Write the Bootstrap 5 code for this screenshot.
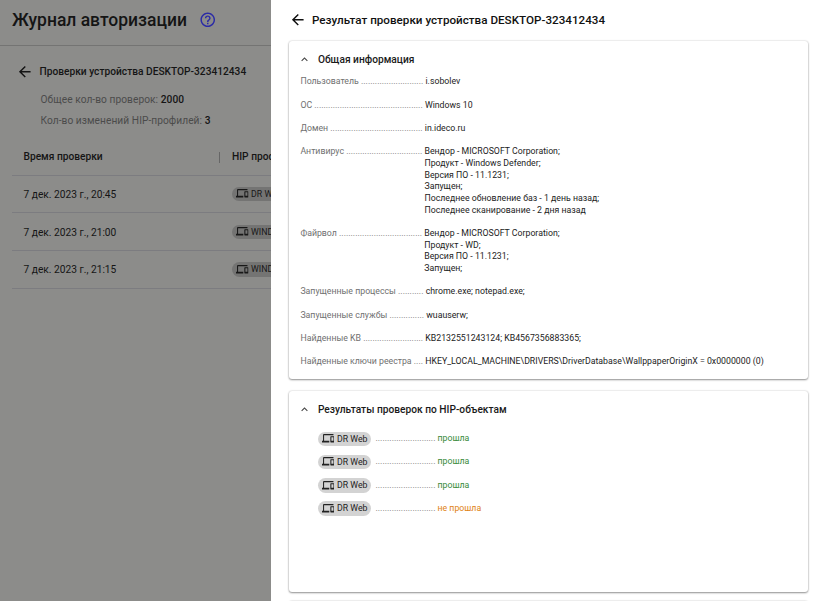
<!DOCTYPE html>
<html lang="ru">
<head>
<meta charset="utf-8">
<meta name="viewport" content="width=device-width, initial-scale=1">
<title>Журнал авторизации</title>
<link href="https://cdn.jsdelivr.net/npm/bootstrap@5.3.0/dist/css/bootstrap.min.css" rel="stylesheet">
<style>
body{width:820px;height:601px;overflow:hidden;font-family:Roboto,"Liberation Sans",sans-serif;font-size:8.75px;line-height:11.67px;color:#1c1c1c;background:#8c8c8a}
svg{display:block;flex:none}
.journal{width:820px;height:601px;color:#151515;font-size:10.2px;line-height:14px}
.journal-head{height:46px;padding:0 12px 6px;border-bottom:1px solid #747473}
.journal-title{font-size:17.5px;line-height:24px;font-weight:500}
.help-icon{color:#2b2ba6;margin-left:12px}
.device{padding:17.5px 0 0 16px;height:92.6px}
.device-name{gap:6px;font-weight:500}
.device-name svg{margin-top:-1px}
.stats{padding-left:24.5px;padding-top:6.2px;color:#4b4b4a;letter-spacing:.05px}
.device-name + .stats{padding-top:13.4px}
.stats b{font-weight:500;color:#151515}
.log{margin-left:12px}
.log-row{height:37.85px;border-bottom:1px solid #7c7c80;padding:1.5px 0 0 11.5px}
.log-row:first-child{height:37px;font-weight:500}
.log-row .chip{margin-left:13px;margin-top:-1.5px}
.when{width:195.5px}
.sep{width:1px;height:11px;background:#666;margin-right:12px}
.chip{height:14.6px;border-radius:8px;background:#d3d3d3;padding:0 4.3px 0 4px;gap:2.6px;color:#222;font-size:8.75px;line-height:14.6px}
.chip svg{margin-top:-1px}
.journal .chip{background:#747473;color:#181818}
.panel{left:271px;top:0;width:549px;height:601px;background:#fff;padding:0 12px 0 18px}
.panel-title{height:41px;font-size:11.67px;font-weight:500;gap:6px;color:#111;margin-left:-.5px}
.panel-title svg{margin-top:-1px}
.sheet{background:#fff;border-radius:3px;box-shadow:0 1px 2px rgba(0,0,0,.4),0 0 2px rgba(0,0,0,.2);padding:12px 11.4px}
.sheet-info{height:337.5px;margin-bottom:12px}
.sheet-hip{height:201.5px;margin-bottom:8.5px}
.sheet-title{font-size:10.2px;line-height:14px;font-weight:500;gap:7.5px;margin-bottom:9.4px;color:#1a1a1a}
.sheet-title svg{margin:-1px -1px 0 -2px;color:#444}
.sheet-hip .sheet-title{margin-bottom:15px}
.fact{margin-bottom:11.67px;white-space:pre}
.fact-name{color:#707070}
.checks{padding-left:17.5px}
.check{height:14.6px;margin-bottom:8.73px;gap:4px}
.check .chip{width:53.6px}
.check .fact-name{margin-right:-2px}
.ok{color:#388a3c}.fail{color:#e08214}
</style>
</head>
<body>
<svg width="0" height="0" class="position-absolute" aria-hidden="true">
<symbol id="back" viewBox="0 0 24 24"><path fill="currentColor" d="M20 11H7.83l5.59-5.59L12 4l-8 8 8 8 1.41-1.41L7.83 13H20v-2z"/></symbol>
<symbol id="devices" viewBox="0 0 24 24"><path fill="currentColor" d="M4 6h18V4H4c-1.1 0-2 .9-2 2v11H0v3h14v-3H4V6zm19 2h-6c-.55 0-1 .45-1 1v10c0 .55.45 1 1 1h6c.55 0 1-.45 1-1V9c0-.55-.45-1-1-1zm-1 9h-4v-7h4v7z"/></symbol>
<symbol id="less" viewBox="0 0 24 24"><path fill="currentColor" d="M12 8l-6 6 1.41 1.41L12 10.83l4.59 4.58L18 14z"/></symbol>
<symbol id="help" viewBox="0 0 24 24"><path fill="currentColor" d="M11 18h2v-2h-2v2zm1-16C6.48 2 2 6.48 2 12s4.48 10 10 10 10-4.48 10-10S17.52 2 12 2zm0 18c-4.41 0-8-3.59-8-8s3.59-8 8-8 8 3.59 8 8-3.59 8-8 8zm0-14c-2.21 0-4 1.79-4 4h2c0-1.1.9-2 2-2s2 .9 2 2c0 2-3 1.75-3 5h2c0-2.25 3-2.5 3-5 0-2.21-1.79-4-4-4z"/></symbol>
</svg>

<main class="journal overflow-hidden">
  <header class="journal-head d-flex align-items-center">
    <div class="journal-title">Журнал авторизации</div>
    <svg class="help-icon" width="17.5" height="17.5"><use href="#help"/></svg>
  </header>
  <section class="device">
    <div class="device-name d-flex align-items-center">
      <svg width="17.5" height="17.5"><use href="#back"/></svg><span>Проверки устройства DESKTOP-323412434</span>
    </div>
    <div class="stats">Общее кол-во проверок: <b>2000</b></div>
    <div class="stats">Кол-во изменений HIP-профилей: <b>3</b></div>
  </section>
  <section class="log">
    <div class="log-row d-flex align-items-center"><span class="when">Время проверки</span><i class="sep"></i><span>HIP профили</span></div>
    <div class="log-row d-flex align-items-center"><span class="when">7 дек. 2023 г., 20:45</span><span class="chip d-flex align-items-center"><svg width="12.5" height="12.5"><use href="#devices"/></svg>DR Web</span></div>
    <div class="log-row d-flex align-items-center"><span class="when">7 дек. 2023 г., 21:00</span><span class="chip d-flex align-items-center"><svg width="12.5" height="12.5"><use href="#devices"/></svg>WINDOWS</span></div>
    <div class="log-row d-flex align-items-center"><span class="when">7 дек. 2023 г., 21:15</span><span class="chip d-flex align-items-center"><svg width="12.5" height="12.5"><use href="#devices"/></svg>WINDOWS</span></div>
  </section>
</main>

<aside class="panel position-absolute overflow-hidden">
  <div class="panel-title d-flex align-items-center"><svg width="17.5" height="17.5"><use href="#back"/></svg><span>Результат проверки устройства DESKTOP-323412434</span></div>
  <section class="sheet sheet-info">
    <div class="sheet-title d-flex align-items-center"><svg width="13" height="13"><use href="#less"/></svg><span>Общая информация</span></div>
    <div class="fact d-flex"><span class="fact-name">Пользователь ........................... </span><span>i.sobolev</span></div>
    <div class="fact d-flex"><span class="fact-name">ОС ............................................... </span><span>Windows 10</span></div>
    <div class="fact d-flex"><span class="fact-name">Домен ........................................ </span><span>in.ideco.ru</span></div>
    <div class="fact d-flex"><span class="fact-name">Антивирус ................................. </span><span>Вендор - MICROSOFT Corporation;<br>Продукт - Windows Defender;<br>Версия ПО - 11.1231;<br>Запущен;<br>Последнее обновление баз - 1 день назад;<br>Последнее сканирование - 2 дня назад</span></div>
    <div class="fact d-flex"><span class="fact-name">Файрвол .................................... </span><span>Вендор - MICROSOFT Corporation;<br>Продукт - WD;<br>Версия ПО - 11.1231;<br>Запущен;</span></div>
    <div class="fact d-flex"><span class="fact-name">Запущенные процессы ........... </span><span>chrome.exe; notepad.exe;</span></div>
    <div class="fact d-flex"><span class="fact-name">Запущенные службы ............... </span><span>wuauserw;</span></div>
    <div class="fact d-flex"><span class="fact-name">Найденные KB .......................... </span><span>KB2132551243124; KB4567356883365;</span></div>
    <div class="fact d-flex"><span class="fact-name">Найденные ключи реестра .... </span><span>HKEY_LOCAL_MACHINE\DRIVERS\DriverDatabase\WallppaperOriginX = 0x0000000 (0)</span></div>
  </section>
  <section class="sheet sheet-hip">
    <div class="sheet-title d-flex align-items-center"><svg width="13" height="13"><use href="#less"/></svg><span>Результаты проверок по HIP-объектам</span></div>
    <div class="checks">
      <div class="check d-flex align-items-center"><span class="chip d-flex align-items-center text-nowrap"><svg width="12.5" height="12.5"><use href="#devices"/></svg>DR Web</span><span class="fact-name">..........................</span><span class="ok">прошла</span></div>
      <div class="check d-flex align-items-center"><span class="chip d-flex align-items-center text-nowrap"><svg width="12.5" height="12.5"><use href="#devices"/></svg>DR Web</span><span class="fact-name">..........................</span><span class="ok">прошла</span></div>
      <div class="check d-flex align-items-center"><span class="chip d-flex align-items-center text-nowrap"><svg width="12.5" height="12.5"><use href="#devices"/></svg>DR Web</span><span class="fact-name">..........................</span><span class="ok">прошла</span></div>
      <div class="check d-flex align-items-center"><span class="chip d-flex align-items-center text-nowrap"><svg width="12.5" height="12.5"><use href="#devices"/></svg>DR Web</span><span class="fact-name">..........................</span><span class="fail">не прошла</span></div>
    </div>
  </section>
  <section class="sheet"></section>
</aside>
<script src="https://cdn.jsdelivr.net/npm/bootstrap@5.3.0/dist/js/bootstrap.bundle.min.js"></script>
</body>
</html>
